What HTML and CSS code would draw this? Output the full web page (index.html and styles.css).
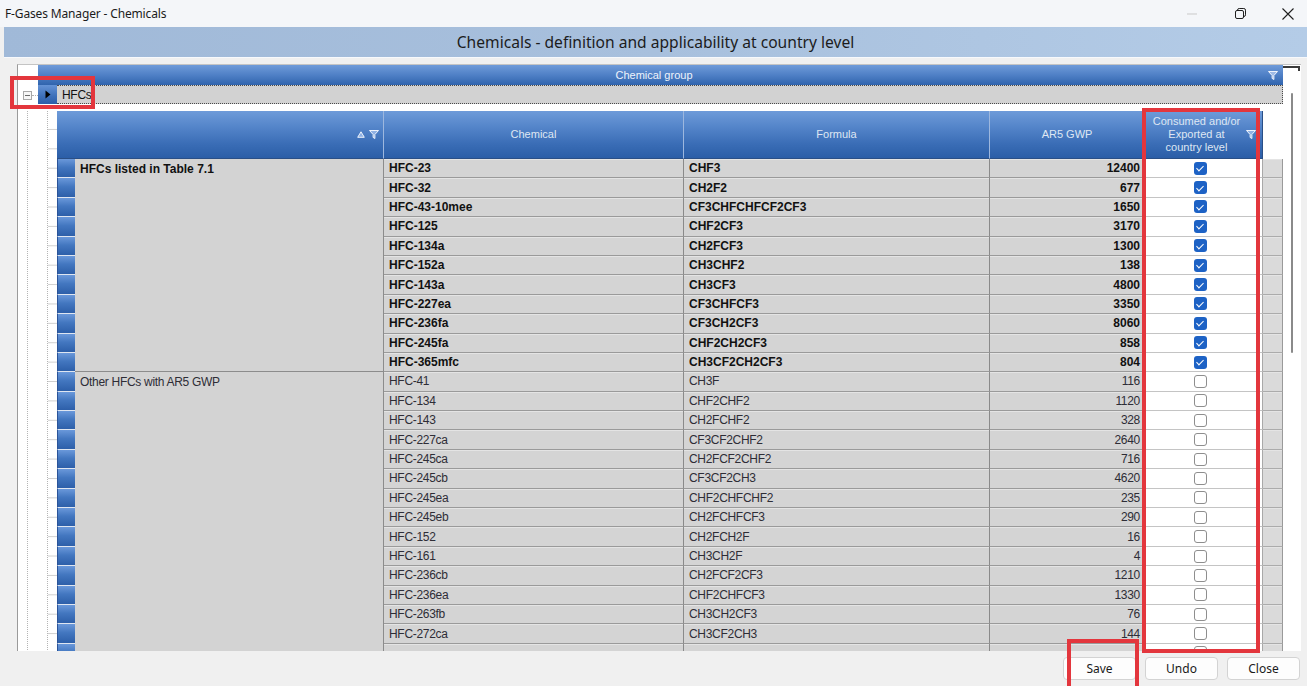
FILE: index.html
```html
<!DOCTYPE html>
<html lang="en">
<head>
<meta charset="utf-8">
<title>F-Gases Manager - Chemicals</title>
<link rel="stylesheet" href="styles.css">
</head>
<body>
<div class="window">
  <div class="titlebar">
    <span class="app-title">F-Gases Manager - Chemicals</span>
    <div class="win-controls">
      <span class="ctl ctl-min"><svg width="10" height="2" viewBox="0 0 10 2"><path d="M0 1h10" stroke="#c9c9c9" stroke-width="1"/></svg></span>
      <span class="ctl"><svg width="11" height="11" viewBox="0 0 11 11"><rect x="0.5" y="2.5" width="8" height="8" rx="1.5" fill="none" stroke="#1f1f1f"/><path d="M2.5 2.5v-0.3a1.7 1.7 0 0 1 1.7-1.7h4.6a1.7 1.7 0 0 1 1.7 1.7v4.6a1.7 1.7 0 0 1-1.7 1.7h-0.3" fill="none" stroke="#1f1f1f"/></svg></span>
      <span class="ctl"><svg width="12" height="12" viewBox="0 0 12 12"><path d="M0.5 0.5l11 11M11.5 0.5l-11 11" stroke="#1f1f1f" stroke-width="1.1"/></svg></span>
    </div>
  </div>

  <div class="form-header">Chemicals - definition and applicability at country level</div>

  <div class="content">
    <div class="grid">
      <div class="grid-main">
        <div class="group-panel">
          <div class="corner"></div>
          <div class="group-bar">
            <span>Chemical group</span>
            <svg class="funnel bar-funnel" width="10" height="9" viewBox="0 0 10 9"><path d="M0.5 0.5h9l-3.6 4v4l-1.8-1.1v-2.9z" fill="#9fbbe6" stroke="#eef3fb"/></svg>
          </div>
        </div>

        <div class="group-row">
          <div class="expander"><span class="exp-box"></span></div>
          <div class="indicator current"><svg width="6" height="9" viewBox="0 0 6 9"><path d="M0.5 0.5L5.5 4.5L0.5 8.5z" fill="#000"/></svg></div>
          <div class="group-caption">HFCs</div>
        </div>

        <div class="detail">
          <div class="tree"></div>
          <div class="table">
            <div class="th th-group">
              <svg class="sort" width="8" height="7" viewBox="0 0 8 7"><path d="M4 0.8L7.3 6.3H0.7z" fill="#8fb1e4" stroke="#eef3fb"/></svg>
              <svg class="funnel" width="10" height="9" viewBox="0 0 10 9"><path d="M0.5 0.5h9l-3.6 4v4l-1.8-1.1v-2.9z" fill="#8fb1e4" stroke="#eef3fb"/></svg>
            </div>
            <div class="th">Chemical</div>
            <div class="th">Formula</div>
            <div class="th">AR5 GWP</div>
            <div class="th th-check">Consumed and/or<br>Exported at<br>country level
              <svg class="funnel th-funnel" width="10" height="9" viewBox="0 0 10 9"><path d="M0.5 0.5h9l-3.6 4v4l-1.8-1.1v-2.9z" fill="#8fb1e4" stroke="#eef3fb"/></svg>
            </div>
            <div class="th th-blank"></div>

            <div class="set set-listed">
              <div class="ind"></div>
              <div class="grp span-11">HFCs listed in Table 7.1</div>
              <div class="cell">HFC-23</div><div class="cell">CHF3</div><div class="cell num">12400</div><div class="cell chk"><span class="box on"></span></div><div class="cell pad"></div>
              <div class="ind"></div>
              <div class="cell">HFC-32</div><div class="cell">CH2F2</div><div class="cell num">677</div><div class="cell chk"><span class="box on"></span></div><div class="cell pad"></div>
              <div class="ind"></div>
              <div class="cell">HFC-43-10mee</div><div class="cell">CF3CHFCHFCF2CF3</div><div class="cell num">1650</div><div class="cell chk"><span class="box on"></span></div><div class="cell pad"></div>
              <div class="ind"></div>
              <div class="cell">HFC-125</div><div class="cell">CHF2CF3</div><div class="cell num">3170</div><div class="cell chk"><span class="box on"></span></div><div class="cell pad"></div>
              <div class="ind"></div>
              <div class="cell">HFC-134a</div><div class="cell">CH2FCF3</div><div class="cell num">1300</div><div class="cell chk"><span class="box on"></span></div><div class="cell pad"></div>
              <div class="ind"></div>
              <div class="cell">HFC-152a</div><div class="cell">CH3CHF2</div><div class="cell num">138</div><div class="cell chk"><span class="box on"></span></div><div class="cell pad"></div>
              <div class="ind"></div>
              <div class="cell">HFC-143a</div><div class="cell">CH3CF3</div><div class="cell num">4800</div><div class="cell chk"><span class="box on"></span></div><div class="cell pad"></div>
              <div class="ind"></div>
              <div class="cell">HFC-227ea</div><div class="cell">CF3CHFCF3</div><div class="cell num">3350</div><div class="cell chk"><span class="box on"></span></div><div class="cell pad"></div>
              <div class="ind"></div>
              <div class="cell">HFC-236fa</div><div class="cell">CF3CH2CF3</div><div class="cell num">8060</div><div class="cell chk"><span class="box on"></span></div><div class="cell pad"></div>
              <div class="ind"></div>
              <div class="cell">HFC-245fa</div><div class="cell">CHF2CH2CF3</div><div class="cell num">858</div><div class="cell chk"><span class="box on"></span></div><div class="cell pad"></div>
              <div class="ind"></div>
              <div class="cell">HFC-365mfc</div><div class="cell">CH3CF2CH2CF3</div><div class="cell num">804</div><div class="cell chk"><span class="box on"></span></div><div class="cell pad"></div>
            </div>

            <div class="set set-other">
              <div class="ind"></div>
              <div class="grp span-15">Other HFCs with AR5 GWP</div>
              <div class="cell">HFC-41</div><div class="cell">CH3F</div><div class="cell num">116</div><div class="cell chk"><span class="box"></span></div><div class="cell pad"></div>
              <div class="ind"></div>
              <div class="cell">HFC-134</div><div class="cell">CHF2CHF2</div><div class="cell num">1120</div><div class="cell chk"><span class="box"></span></div><div class="cell pad"></div>
              <div class="ind"></div>
              <div class="cell">HFC-143</div><div class="cell">CH2FCHF2</div><div class="cell num">328</div><div class="cell chk"><span class="box"></span></div><div class="cell pad"></div>
              <div class="ind"></div>
              <div class="cell">HFC-227ca</div><div class="cell">CF3CF2CHF2</div><div class="cell num">2640</div><div class="cell chk"><span class="box"></span></div><div class="cell pad"></div>
              <div class="ind"></div>
              <div class="cell">HFC-245ca</div><div class="cell">CH2FCF2CHF2</div><div class="cell num">716</div><div class="cell chk"><span class="box"></span></div><div class="cell pad"></div>
              <div class="ind"></div>
              <div class="cell">HFC-245cb</div><div class="cell">CF3CF2CH3</div><div class="cell num">4620</div><div class="cell chk"><span class="box"></span></div><div class="cell pad"></div>
              <div class="ind"></div>
              <div class="cell">HFC-245ea</div><div class="cell">CHF2CHFCHF2</div><div class="cell num">235</div><div class="cell chk"><span class="box"></span></div><div class="cell pad"></div>
              <div class="ind"></div>
              <div class="cell">HFC-245eb</div><div class="cell">CH2FCHFCF3</div><div class="cell num">290</div><div class="cell chk"><span class="box"></span></div><div class="cell pad"></div>
              <div class="ind"></div>
              <div class="cell">HFC-152</div><div class="cell">CH2FCH2F</div><div class="cell num">16</div><div class="cell chk"><span class="box"></span></div><div class="cell pad"></div>
              <div class="ind"></div>
              <div class="cell">HFC-161</div><div class="cell">CH3CH2F</div><div class="cell num">4</div><div class="cell chk"><span class="box"></span></div><div class="cell pad"></div>
              <div class="ind"></div>
              <div class="cell">HFC-236cb</div><div class="cell">CH2FCF2CF3</div><div class="cell num">1210</div><div class="cell chk"><span class="box"></span></div><div class="cell pad"></div>
              <div class="ind"></div>
              <div class="cell">HFC-236ea</div><div class="cell">CHF2CHFCF3</div><div class="cell num">1330</div><div class="cell chk"><span class="box"></span></div><div class="cell pad"></div>
              <div class="ind"></div>
              <div class="cell">HFC-263fb</div><div class="cell">CH3CH2CF3</div><div class="cell num">76</div><div class="cell chk"><span class="box"></span></div><div class="cell pad"></div>
              <div class="ind"></div>
              <div class="cell">HFC-272ca</div><div class="cell">CH3CF2CH3</div><div class="cell num">144</div><div class="cell chk"><span class="box"></span></div><div class="cell pad"></div>
              <div class="ind"></div>
              <div class="cell"></div><div class="cell"></div><div class="cell num"></div><div class="cell chk"><span class="box"></span></div><div class="cell pad"></div>
            </div>
          </div>
        </div>
      </div>

      <div class="vscroll">
        <div class="vscroll-cap"></div>
        <div class="vscroll-thumb"></div>
      </div>
    </div>
  </div>

  <div class="footer">
    <button class="btn">Save</button>
    <button class="btn">Undo</button>
    <button class="btn">Close</button>
  </div>

  <div class="mark mark-group"></div>
  <div class="mark mark-column"></div>
  <div class="mark mark-save"></div>
</div>
</body>
</html>
```

FILE: styles.css
```css
* { box-sizing: border-box; }

html, body {
  margin: 0;
  padding: 0;
}

body {
  width: 1307px;
  height: 686px;
  overflow: hidden;
  background: #f0f0f0;
  font-family: "Liberation Sans", Arial, sans-serif;
}

.window {
  position: relative;
  width: 1307px;
  height: 686px;
  overflow: hidden;
  background: #f0f0f0;
}

/* ---- window caption ---- */
.titlebar {
  height: 27px;
  background: #f4f6f9;
  display: flex;
  align-items: center;
  overflow: hidden;
}

.app-title {
  padding-left: 5px;
  font-family: "Noto Sans", "Open Sans", sans-serif;
  font-size: 12px;
  color: #1b1b1b;
  letter-spacing: -0.15px;
}

.win-controls {
  margin-left: auto;
  margin-right: -5px;
  display: flex;
  height: 100%;
}

.ctl {
  width: 48px;
  height: 100%;
  display: flex;
  align-items: center;
  justify-content: center;
}

/* ---- form header band ---- */
.form-header {
  height: 31px;
  margin-left: 4px;
  background: linear-gradient(to right, #a0b9d8 0%, #a8c0dd 50%, #b4cce7 100%);
  border-bottom: 1px solid #f7f9fc;
  display: flex;
  align-items: center;
  justify-content: center;
  font-family: "Noto Sans", "Open Sans", sans-serif;
  font-size: 15.6px;
  color: #1c1c1c;
  padding-bottom: 1px;
}

/* ---- grid frame ---- */
.content {
  padding: 6px 6px 0 17px;
}

.grid {
  height: 587px;
  background: #fff;
  border-left: 1px solid #9a9a9a;
  border-top: 1px solid #c4c4c4;
  display: flex;
  overflow: hidden;
}

.grid-main {
  width: 1265px;
  display: flex;
  flex-direction: column;
}

.group-panel {
  height: 20px;
  display: flex;
}

.corner {
  width: 20px;
  background: #fff;
}

.group-bar {
  flex: 1;
  position: relative;
  display: flex;
  align-items: center;
  justify-content: center;
  padding-right: 13px;
  background: linear-gradient(to bottom, #6f9bd9 0%, #4f80c6 50%, #3064ad 100%);
  color: #eef3fb;
  font-size: 11px;
}

.funnel { display: block; }

.bar-funnel {
  position: absolute;
  right: 5px;
  top: 6px;
}

/* ---- group-by row ---- */
.group-row {
  height: 19px;
  display: flex;
}

.expander {
  width: 20px;
  position: relative;
}

.expander::after {
  content: "";
  position: absolute;
  left: 14px;
  top: 10px;
  width: 6px;
  border-top: 1px dotted #b0b0b0;
}

.exp-box {
  position: absolute;
  left: 5px;
  top: 6px;
  width: 9px;
  height: 9px;
  border: 1px solid #a8a8a8;
  background: #f6f6f6;
}

.exp-box::after {
  content: "";
  position: absolute;
  left: 1px;
  top: 3px;
  width: 5px;
  height: 1px;
  background: #6a6a6a;
}

.indicator {
  width: 19px;
  background: linear-gradient(to bottom, #6593d6 0%, #3d6fb9 60%, #2c5ea8 100%);
  display: flex;
  align-items: center;
  justify-content: center;
}

.group-caption {
  flex: 1;
  background: #d2d2d2;
  border-top: 1px dotted #4a4a4a;
  border-bottom: 1px dotted #4a4a4a;
  border-right: 1px dotted #4a4a4a;
  padding-left: 5px;
  font-size: 12px;
  letter-spacing: -0.3px;
  color: #111;
  display: flex;
  align-items: center;
}

/* ---- detail grid ---- */
.detail {
  margin-top: 7px;
  flex: 1;
  display: flex;
  overflow: hidden;
}

.tree {
  width: 39px;
  flex: none;
  background:
    repeating-linear-gradient(to bottom, #b4b4b4 0 1px, transparent 1px 2px) 9px 0 / 1px 100% no-repeat,
    repeating-linear-gradient(to bottom, #b4b4b4 0 1px, transparent 1px 2px) 29px 0 / 1px 100% no-repeat,
    linear-gradient(to bottom, transparent 9px, #cfcfcf 9px 10px, transparent 10px) 30px 48px / 9px 19.4px repeat-y;
}

.table {
  width: 1226px;
  display: grid;
  grid-template-columns: 18px 309px 300px 306px 155px 118px 20px;
  grid-template-rows: 48px;
  grid-auto-rows: 19.4px;
  align-content: start;
}

.set { display: contents; }
.set-listed { font-weight: bold; color: #111; }
.set-other { font-weight: normal; color: #2e2d36; letter-spacing: -0.3px; }

.th {
  position: relative;
  background: linear-gradient(to bottom, #6e9bd9 0%, #5384c9 35%, #3a6db6 70%, #2b5ea7 100%);
  border-right: 1px solid #9db7de;
  border-bottom: 1px solid #2a4f86;
  color: #dfe7f3;
  font-size: 11px;
  line-height: 13px;
  text-align: center;
  display: flex;
  align-items: center;
  justify-content: center;
}

.th-group {
  grid-column: span 2;
  justify-content: flex-end;
  gap: 4px;
  padding-right: 4px;
}

.th-check {
  padding-right: 14px;
  border-right: 1px solid #2a4f86;
}

.th-funnel {
  position: absolute;
  right: 6px;
  top: 19px;
}

.th-blank {
  background: #fff;
  border-right: none;
  border-bottom: none;
}

.ind {
  background: linear-gradient(to bottom, #6a98da 0%, #4377c0 45%, #2d5fa9 100%);
  border-bottom: 1px solid #dfe6f1;
  border-left: 1px solid #2a5398;
}

.grp {
  background: #d3d3d3;
  border-right: 1px solid #8c8c8c;
  border-bottom: 1px solid #8c8c8c;
  padding: 3px 0 0 5px;
  font-size: 12px;
}

.span-11 { grid-row: span 11; }
.span-15 { grid-row: span 15; }

.cell {
  background: #d4d4d4;
  border-right: 1px solid #8a8a8a;
  border-bottom: 1px solid #9a9a9a;
  box-shadow: inset 0 1px 0 #e4e4e4;
  padding-left: 5px;
  font-size: 12px;
  display: flex;
  align-items: center;
  white-space: nowrap;
  overflow: hidden;
}

.cell.num {
  justify-content: flex-end;
  padding-left: 0;
  padding-right: 4px;
}

.cell.chk {
  background: #fff;
  box-shadow: none;
  border-bottom: 1px solid #c4c4c4;
  border-right: 1px solid #a8a8a8;
  justify-content: center;
  padding: 0 6px 0 0;
}

.cell.pad {
  background: #dadada;
  border-right: 1px solid #9a9a9a;
  border-bottom: 1px solid #ababab;
  padding: 0;
}

.box {
  position: relative;
  width: 13px;
  height: 13px;
  border-radius: 3px;
  border: 1.5px solid #8e8e8e;
  background: #fff;
}

.box.on {
  border: none;
  background: #1d62c5;
}

.box.on::after {
  content: "";
  position: absolute;
  left: 4px;
  top: 2.5px;
  width: 3px;
  height: 6px;
  border-right: 1.3px solid #fff;
  border-bottom: 1.3px solid #fff;
  transform: rotate(45deg);
}

/* ---- vertical scroll strip ---- */
.vscroll {
  width: 18px;
  position: relative;
  background: #fff;
}

.vscroll-cap {
  position: absolute;
  left: 0;
  top: 1px;
  width: 17px;
  height: 5px;
  border-top: 2px solid #3a3a3a;
  border-right: 2px solid #3a3a3a;
  background: #fff;
}

.vscroll-thumb {
  position: absolute;
  left: 8px;
  top: 28px;
  width: 2px;
  height: 260px;
  border-radius: 1px;
  background: #8a8a8a;
}

/* ---- footer buttons ---- */
.footer {
  height: 35px;
  display: flex;
  justify-content: flex-end;
  align-items: flex-start;
  gap: 9px;
  padding: 6px 7px 0 0;
}

.btn {
  width: 73px;
  height: 23px;
  background: #fdfdfd;
  border: 1px solid #d3d3d3;
  border-radius: 4px;
  font-family: "Noto Sans", "Open Sans", sans-serif;
  font-size: 12px;
  color: #1a1a1a;
  padding: 0;
}

/* ---- red highlight frames ---- */
.mark {
  position: absolute;
  border: 4px solid #e3363d;
  pointer-events: none;
}

.mark-group { left: 10px; top: 76px; width: 85px; height: 33px; }
.mark-column { left: 1142px; top: 108px; width: 118px; height: 545px; }
.mark-save { left: 1067px; top: 639px; width: 72px; height: 60px; }
```
